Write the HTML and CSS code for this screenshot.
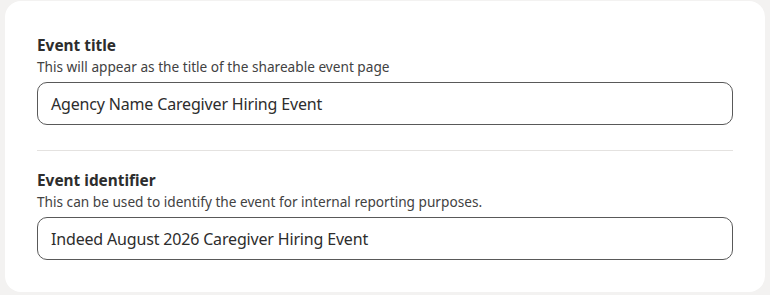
FILE: index.html
```html
<!DOCTYPE html>
<html>
<head>
<meta charset="utf-8">
<link rel="stylesheet" href="styles.css">
</head>
<body>
<div class="page">
  <section class="card">
    <div class="field">
      <label class="label">Event title</label>
      <p class="hint">This will appear as the title of the shareable event page</p>
      <div class="input">Agency Name Caregiver Hiring Event</div>
    </div>
    <hr class="divider">
    <div class="field">
      <label class="label">Event identifier</label>
      <p class="hint">This can be used to identify the event for internal reporting purposes.</p>
      <div class="input">Indeed August 2026 Caregiver Hiring Event</div>
    </div>
  </section>
</div>
</body>
</html>
```
FILE: styles.css
```css
html, body {
  margin: 0;
  padding: 0;
  background: #f3f2f1;
}
body {
  font-family: "Noto Sans", sans-serif;
  color: #2d2d2d;
}
.page {
  padding: 1px 5px 3px 5px;
}
.card {
  background: #ffffff;
  border-radius: 16px;
  padding: 36px 32px 32px 32px;
  display: flex;
  flex-direction: column;
}
.field {
  display: flex;
  flex-direction: column;
}
.label {
  font-size: 15.4px;
  font-weight: 700;
  line-height: 18px;
  color: #2d2d2d;
}
.hint {
  margin: 3px 0 6px 0;
  font-size: 13.65px;
  line-height: 18px;
  color: #424242;
}
.input {
  height: 43px;
  box-sizing: border-box;
  border: 1px solid #595959;
  border-radius: 10px;
  padding: 0 13px;
  display: flex;
  align-items: center;
  font-size: 16px;
  letter-spacing: -0.17px;
  color: #2d2d2d;
}
.divider {
  margin: 25px 0 21px 0;
  border: 0;
  border-top: 1px solid #e4e2e0;
  height: 0;
}
```
